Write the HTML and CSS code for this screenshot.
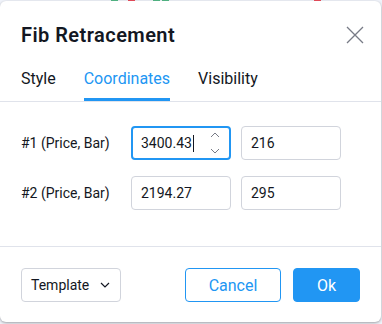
FILE: index.html
```html
<!DOCTYPE html>
<html>
<head>
<meta charset="utf-8">
<link rel="stylesheet" href="styles.css">
</head>
<body>
<div class="chart">
  <span class="candle up" style="left:111px;width:7px"></span>
  <span class="candle down" style="left:128px;width:7px"></span>
  <span class="candle up" style="left:153px;width:7px"></span>
  <span class="candle up" style="left:162px;width:7px"></span>
  <span class="candle down" style="left:314px;width:7px"></span>
</div>
<div class="dialog">
  <div class="header">
    <h1 class="title">Fib Retracement</h1>
    <button class="close" aria-label="Close">
      <svg width="18" height="18" viewBox="0 0 18 18"><path d="M1 1 L17 17 M17 1 L1 17" stroke="#787b86" stroke-width="1.3" fill="none"/></svg>
    </button>
  </div>
  <div class="tabs">
    <div class="tab">Style</div>
    <div class="tab active">Coordinates</div>
    <div class="tab">Visibility</div>
  </div>
  <div class="body">
    <div class="row">
      <div class="label">#1 (Price, Bar)</div>
      <div class="input focused">
        <span class="val">3400.43</span><span class="caret"></span>
        <span class="spin">
          <svg width="10" height="24" viewBox="0 0 10 24"><path d="M1 6 L5 2 L9 6 M1 18 L5 22 L9 18" stroke="#787b86" stroke-width="1" fill="none"/></svg>
        </span>
      </div>
      <div class="input">216</div>
    </div>
    <div class="row">
      <div class="label">#2 (Price, Bar)</div>
      <div class="input">2194.27</div>
      <div class="input">295</div>
    </div>
  </div>
  <div class="footer">
    <div class="select">Template
      <svg width="10" height="6" viewBox="0 0 10 6"><path d="M1 1 L5 5 L9 1" stroke="#131722" stroke-width="1.2" fill="none"/></svg>
    </div>
    <div class="spacer"></div>
    <button class="btn cancel">Cancel</button>
    <button class="btn ok">Ok</button>
  </div>
</div>
</body>
</html>
```
FILE: styles.css
```css
html, body {
  margin: 0;
  padding: 0;
}
body {
  width: 382px;
  height: 324px;
  background: #f4f5f8;
  font-family: Roboto, "Noto Sans", sans-serif;
  color: #131722;
  position: relative;
  overflow: hidden;
}
.chart {
  position: absolute;
  left: 0;
  top: 0;
  width: 382px;
  height: 324px;
  background: #f0f3fa;
}
.candle {
  position: absolute;
  top: 0;
  height: 2px;
}
.candle.up { background: #53b987; }
.candle.down { background: #eb4d5c; }
.dialog {
  position: absolute;
  left: 0;
  top: 1px;
  width: 381px;
  height: 321px;
  background: #fff;
  border-radius: 6px;
  box-shadow: 0 1px 3px rgba(0,0,0,0.35);
  display: flex;
  flex-direction: column;
  box-sizing: border-box;
}
.header {
  display: flex;
  align-items: center;
  justify-content: space-between;
  padding: 22px 17px 0 21px;
}
.title {
  margin: 0;
  font-size: 20px;
  line-height: 24px;
  font-weight: 600;
  letter-spacing: 0.45px;
  color: #131722;
}
.close {
  border: 0;
  background: none;
  padding: 0;
  width: 18px;
  height: 18px;
  display: flex;
}
.tabs {
  display: flex;
  gap: 28px;
  padding: 20px 21px 0;
  border-bottom: 1px solid #e0e3eb;
}
.tab {
  font-size: 16px;
  line-height: 24px;
  padding-bottom: 7px;
  border-bottom: 3px solid transparent;
  color: #131722;
}
.tab.active {
  color: #2196f3;
  border-bottom-color: #2196f3;
}
.body {
  padding: 24px 21px 36px;
  display: flex;
  flex-direction: column;
  gap: 16px;
  border-bottom: 1px solid #e0e3eb;
}
.row {
  display: flex;
  align-items: center;
  gap: 10px;
}
.label {
  width: 100px;
  font-size: 14px;
  color: #131722;
}
.input {
  box-sizing: border-box;
  width: 100px;
  height: 34px;
  border: 1px solid #d1d4dc;
  border-radius: 4px;
  padding: 0 9px;
  font-size: 14px;
  display: flex;
  align-items: center;
  position: relative;
}
.input.focused {
  border: 2px solid #2196f3;
  padding: 0 8px;
}
.caret {
  width: 1px;
  height: 17px;
  background: #131722;
  margin-left: 1px;
}
.spin {
  position: absolute;
  right: 9px;
  top: 3px;
  display: flex;
}
.footer {
  display: flex;
  align-items: center;
  padding: 21px 21px 0;
}
.spacer { flex: 1; }
.select {
  box-sizing: border-box;
  width: 100px;
  height: 34px;
  border: 1px solid #d1d4dc;
  border-radius: 4px;
  padding: 0 10px 0 9px;
  font-size: 14px;
  display: flex;
  align-items: center;
  justify-content: space-between;
}
.btn {
  box-sizing: border-box;
  height: 34px;
  border-radius: 4px;
  font-family: inherit;
  font-size: 16px;
  border: 1px solid #2196f3;
}
.cancel {
  width: 96px;
  background: #fff;
  color: #2196f3;
  margin-right: 12px;
}
.ok {
  width: 67px;
  background: #2196f3;
  color: #fff;
}
```
